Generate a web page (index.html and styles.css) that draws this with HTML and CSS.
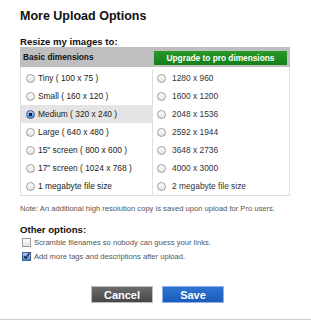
FILE: index.html
```html
<!DOCTYPE html>
<html lang="en">
<head>
    <meta charset="UTF-8">
    <meta name="viewport" content="width=device-width, initial-scale=1.0">
    <link rel="stylesheet" href="styles.css">
    <title>More Upload Options</title>
</head>
<body>
    <div class="dialog">
        <h1 class="title">More Upload Options</h1>
        <h2 class="section">Resize my images to:</h2>
        <div class="dims">
            <div class="dims-head">
                <div class="head-basic">Basic dimensions</div>
                <div class="head-pro"><div class="pro-label">Upgrade to pro dimensions</div></div>
            </div>
            <div class="dims-body">
                <ul class="sizes sizes-basic">
                    <li><span class="radio"></span>Tiny ( 100 x 75 )</li>
                    <li><span class="radio"></span>Small ( 160 x 120 )</li>
                    <li class="selected"><span class="radio on"></span>Medium ( 320 x 240 )</li>
                    <li><span class="radio"></span>Large ( 640 x 480 )</li>
                    <li><span class="radio"></span>15&quot; screen ( 800 x 600 )</li>
                    <li><span class="radio"></span>17&quot; screen ( 1024 x 768 )</li>
                    <li><span class="radio"></span>1 megabyte file size</li>
                </ul>
                <ul class="sizes sizes-pro">
                    <li><span class="radio"></span>1280 x 960</li>
                    <li><span class="radio"></span>1600 x 1200</li>
                    <li><span class="radio"></span>2048 x 1536</li>
                    <li><span class="radio"></span>2592 x 1944</li>
                    <li><span class="radio"></span>3648 x 2736</li>
                    <li><span class="radio"></span>4000 x 3000</li>
                    <li><span class="radio"></span>2 megabyte file size</li>
                </ul>
            </div>
        </div>
        <p class="note">Note: An additional high resolution copy is saved upon upload for Pro users.</p>
        <h2 class="section other">Other options:</h2>
        <ul class="checks">
            <li><span class="box"></span>Scramble filenames so nobody can guess your links.</li>
            <li><span class="box on"><svg viewBox="0 0 8 8" width="8" height="8"><path d="M1.2 4.2 L3.2 6.4 L7.2 0.6" fill="none" stroke="#13233f" stroke-width="1.6"/></svg></span>Add more tags and descriptions after upload.</li>
        </ul>
        <div class="actions">
            <button class="btn btn-cancel">Cancel</button>
            <button class="btn btn-save">Save</button>
        </div>
    </div>
    <div class="footer-bar"></div>
</body>
</html>
```

FILE: styles.css
```css
body {
    margin: 0;
    width: 311px;
    height: 320px;
    overflow: hidden;
    font-family: 'Liberation Sans', Arial, sans-serif;
    background-color: #fff;
    color: #222;
}

.dialog {
    padding: 0 20px;
}

.title {
    margin: 9px 0 0;
    font-size: 12.5px;
    line-height: 15px;
    font-weight: bold;
    color: #111;
}

.section {
    margin: 12px 0 0;
    font-size: 9.6px;
    line-height: 11px;
    font-weight: bold;
    color: #111;
}

.section.other {
    margin-top: 10px;
}

.dims {
    width: 270px;
}

.dims-head {
    display: flex;
    height: 20px;
    background-color: #bfbfbf;
    font-size: 8.3px;
    font-weight: bold;
}

.head-basic {
    width: 129px;
    padding-left: 3px;
    display: flex;
    align-items: center;
    color: #111;
}

.head-pro {
    flex: 1;
    padding: 4px 3px 2px 2px;
}

.pro-label {
    height: 14px;
    line-height: 14px;
    text-align: center;
    color: #fff;
    background: linear-gradient(#2a9a2a, #13801a);
}

.dims-body {
    display: grid;
    grid-template-columns: 132px 1fr;
    padding-top: 2px;
    border: 1px solid #dedede;
    border-top: none;
}

.sizes {
    list-style: none;
    margin: 0;
    padding: 0;
    font-size: 8.4px;
}

.sizes-basic {
    border-right: 1px solid #dedede;
}

.sizes li {
    display: flex;
    align-items: center;
    height: 18px;
}

.sizes-basic li {
    padding-left: 5px;
    gap: 3px;
}

.sizes-pro li {
    padding-left: 4px;
    gap: 6px;
    color: #333;
}

.sizes li.selected {
    background-color: #e4e4e4;
}

.radio {
    width: 7px;
    height: 7px;
    border: 1px solid #9c9c9c;
    border-radius: 50%;
    background: linear-gradient(#fff, #e2e2e2);
    display: flex;
    align-items: center;
    justify-content: center;
}

.radio.on {
    border-color: #3d5f96;
    background: radial-gradient(circle, #0f1d3a 0 1.6px, transparent 2px), linear-gradient(#b3cff3, #4a86d6);
}

.note {
    margin: 8px 0 0;
    font-size: 7.6px;
    line-height: 10px;
    color: #555;
}

.checks {
    list-style: none;
    margin: 0;
    padding: 0 0 0 2px;
    font-size: 7.6px;
    color: #555;
}

.checks li {
    display: flex;
    align-items: center;
    gap: 3px;
    height: 14.5px;
}

.box {
    width: 7px;
    height: 7px;
    border: 1px solid #999;
    background: linear-gradient(#fff, #e6e6e6);
    display: flex;
    align-items: center;
    justify-content: center;
}

.box.on {
    border-color: #3d5f96;
    background: linear-gradient(#b3cff3, #4a86d6);
}

.box svg {
    display: block;
    margin-top: -1px;
}

.actions {
    display: flex;
    justify-content: center;
    gap: 9px;
    margin-top: 22px;
    padding-left: 4px;
}

.btn {
    width: 62px;
    height: 17px;
    padding: 0;
    font-family: 'Liberation Sans', Arial, sans-serif;
    font-size: 11px;
    font-weight: bold;
    color: #fff;
    cursor: pointer;
}

.btn-cancel {
    border: 1px solid #bdbdbd;
    background: linear-gradient(#6c6c6c, #474747);
}

.btn-save {
    border: 1px solid #8fb1e3;
    background: linear-gradient(#2f74d3, #1b5cbc);
}

.footer-bar {
    margin-top: 16px;
    height: 6px;
    background-color: #cfcfcf;
}
```
